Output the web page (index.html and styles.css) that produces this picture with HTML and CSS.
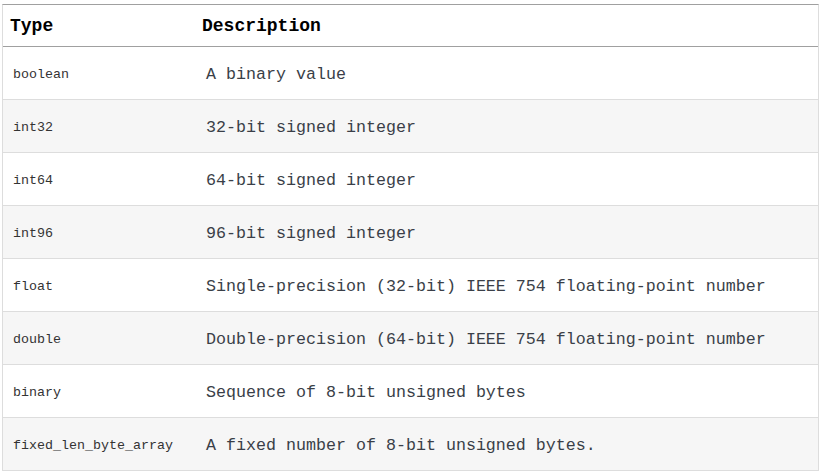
FILE: index.html
```html
<!DOCTYPE html>
<html lang="en">
<head>
<meta charset="utf-8">
<title>Types</title>
<link rel="stylesheet" href="styles.css">
</head>
<body>
<table class="types">
  <colgroup>
    <col class="col-type">
    <col class="col-desc">
  </colgroup>
  <thead>
    <tr>
      <th class="h-type">Type</th>
      <th class="h-desc">Description</th>
    </tr>
  </thead>
  <tbody>
    <tr><td class="c-type">boolean</td><td class="c-desc">A binary value</td></tr>
    <tr class="alt"><td class="c-type">int32</td><td class="c-desc">32-bit signed integer</td></tr>
    <tr><td class="c-type">int64</td><td class="c-desc">64-bit signed integer</td></tr>
    <tr class="alt"><td class="c-type">int96</td><td class="c-desc">96-bit signed integer</td></tr>
    <tr><td class="c-type">float</td><td class="c-desc">Single-precision (32-bit) IEEE 754 floating-point number</td></tr>
    <tr class="alt"><td class="c-type">double</td><td class="c-desc">Double-precision (64-bit) IEEE 754 floating-point number</td></tr>
    <tr><td class="c-type">binary</td><td class="c-desc">Sequence of 8-bit unsigned bytes</td></tr>
    <tr class="alt"><td class="c-type">fixed_len_byte_array</td><td class="c-desc">A fixed number of 8-bit unsigned bytes.</td></tr>
  </tbody>
</table>
</body>
</html>
```

FILE: styles.css
```css
html, body {
  margin: 0;
  padding: 0;
  background: #ffffff;
}

.types {
  margin: 4px 0 0 2px;
  width: 817px;
  table-layout: fixed;
  border-collapse: separate;
  border-spacing: 0;
  border-top: 1px solid #a0a0a0;
  border-left: 1px solid #dddddd;
  border-right: 1px solid #dddddd;
  font-family: "Liberation Mono", "DejaVu Sans Mono", monospace;
}

.col-type {
  width: 193px;
}

.types th {
  text-align: left;
  font-weight: bold;
  font-size: 18px;
  line-height: 21px;
  color: #000000;
  padding: 11px 0 9px 7px;
  border-bottom: 1px solid #a0a0a0;
  background: #ffffff;
}

.types td {
  padding: 18px 10px 14px;
  line-height: 20px;
  border-bottom: 1px solid #dddddd;
  vertical-align: middle;
  white-space: nowrap;
}

.types .h-desc {
  padding-left: 6px;
}

.c-type {
  font-size: 13.333px;
  color: #333333;
}

.c-desc {
  font-size: 16.667px;
  color: #3a3f48;
}

.alt td {
  background: #f6f6f6;
}
```
